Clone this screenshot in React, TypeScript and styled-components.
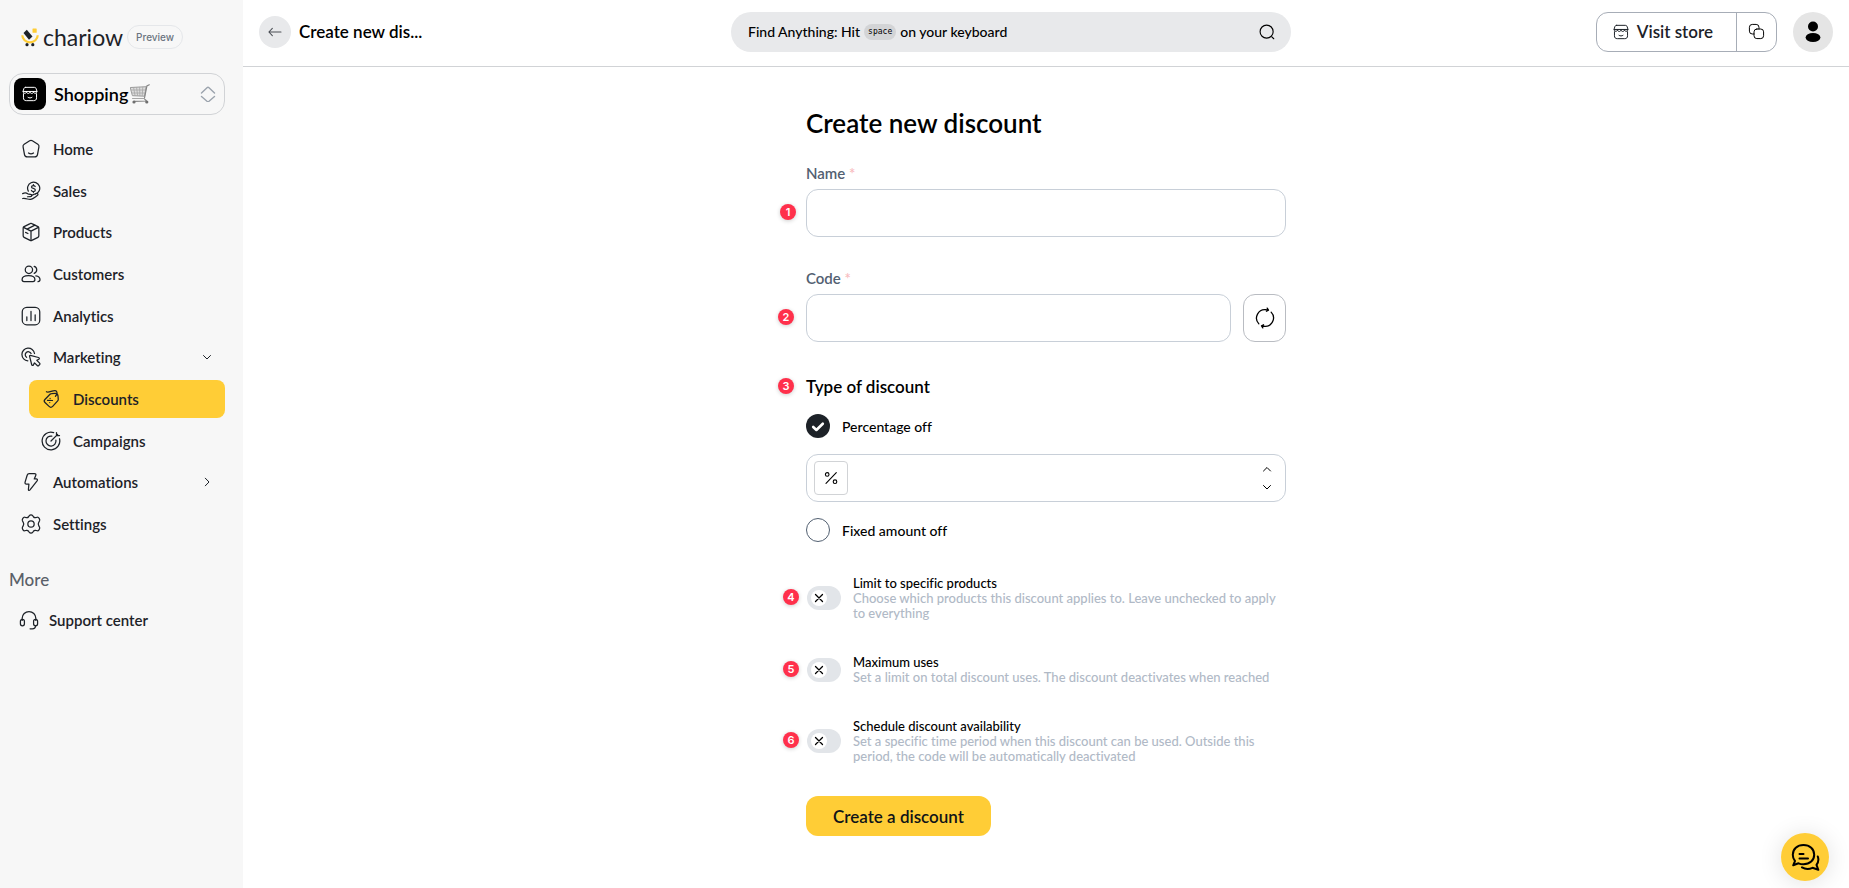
import React from "react";
import styled, { createGlobalStyle } from "styled-components";

const color = {
  ink: "#1d2228",
  black: "#000000",
  yellow: "#ffcd36",
  sidebar: "#f7f7f7",
  line: "#d1d3d6",
  field: "#c8cfd8",
  label: "#526071",
  hint: "#b0b9c6",
  pill: "#e8e9eb",
  red: "#ff304b",
};

const GlobalStyle = createGlobalStyle`
  *, *::before, *::after { box-sizing: border-box; }
  body {
    margin: 0;
    font-family: Lato, "Open Sans", sans-serif;
    font-size: 14px;
    font-variant-ligatures: none;
    color: ${color.black};
    background: #ffffff;
  }
  button, input { font: inherit; font-variant-ligatures: none; color: inherit; }
  button { cursor: pointer; }
  svg { display: block; flex: none; }
`;

/* ---------- icons ---------- */

type IconProps = { size?: number; weight?: number; children?: React.ReactNode; box?: number };

const Icon = ({ size = 20, weight = 1.5, box = 24, children }: IconProps) => (
  <svg
    width={size}
    height={size}
    viewBox={`0 0 ${box} ${box}`}
    fill="none"
    stroke="currentColor"
    strokeWidth={weight}
    strokeLinecap="round"
    strokeLinejoin="round"
    aria-hidden="true"
  >
    {children}
  </svg>
);

const HomeIcon = () => (
  <Icon>
    <path d="M10.4 2.1a3 3 0 0 1 3.2 0l6.600 4.200a3 3 0 0 1 1.300 3.200l-1.700 9.200a3.400 3.400 0 0 1-3.300 2.800h-9a3.400 3.400 0 0 1-3.300-2.800L2.500 9.500a3 3 0 0 1 1.300-3.200z" />
    <path d="M9 16.800c1.800 1.300 4.200 1.300 6 0" />
  </Icon>
);

const SalesIcon = () => (
  <Icon>
    <path d="M8.800 12.200A7.300 7.300 0 1 1 17.500 15.600" />
    <path d="M17 6.600c-.4-.8-1.200-1.200-2.200-1.200-1.300 0-2.200.7-2.200 1.700 0 2.500 4.600 1.200 4.600 3.800 0 1.100-1 1.800-2.300 1.800-1.200 0-2.100-.6-2.400-1.500M14.900 4.200v1.200M14.900 12.700v1.200" />
    <path d="M2 15.200c2.400-1.300 4.300-1.300 6 .1 1 .7 2 .7 3.300.7 2.200 0 2.200 2.700 0 2.800l-3.500.1" />
    <path d="M12.600 17.300l5.600-2.300c2-.8 3 1.400 1.300 2.500-2.700 1.800-5.200 4-7.800 4.500-3 .6-5-1.600-9.700-1" />
  </Icon>
);

const ProductsIcon = () => (
  <Icon>
    <path d="M11 1.900a2 2 0 0 1 2 0l7.300 3.700a2 2 0 0 1 1.100 1.800v9.200a2 2 0 0 1-1.100 1.800L13 22.100a2 2 0 0 1-2 0l-7.300-3.700a2 2 0 0 1-1.100-1.800V7.400a2 2 0 0 1 1.100-1.800z" />
    <path d="M3 6.500l9 4.500 9-4.500M12 11v11M7.300 8.500l9.400-4.700M5.500 12.500l2.800 1.300" />
  </Icon>
);

const CustomersIcon = () => (
  <Icon>
    <circle cx="9.500" cy="7" r="4.400" />
    <path d="M15.800 2.800a4.400 4.400 0 0 1 0 8.400" />
    <path d="M1.300 18.700c0-3 3-4.700 7.700-4.700s7.700 1.700 7.700 4.700c0 1.500-.8 2.500-2.300 2.500H3.600c-1.500 0-2.300-1-2.300-2.500z" />
    <path d="M17.800 14.300c3.100.4 5 2 5 4.400 0 1.500-.9 2.500-2.400 2.500" />
  </Icon>
);

const AnalyticsIcon = () => (
  <Icon>
    <rect x="1.500" y="1.500" width="21" height="21" rx="5.500" />
    <path d="M7 13v4.500M12 6.500v11M17 10.500v7" />
  </Icon>
);

const MarketingIcon = () => (
  <Icon>
    <path d="M8.200 16.600a7.600 7.600 0 1 1 8-8.800" />
    <path d="M6.700 12.400a3.700 3.700 0 1 1 5.400-4.700" />
    <path d="M11.200 10.100l9.800 2.500c1.200.3 1.300 1.500.3 2.100l-2.300 1.300 3.300 3.400c.6.600.6 1.200 0 1.800l-1 1c-.6.600-1.200.6-1.800 0L16.200 19l-1.300 2.400c-.6 1-1.800.8-2.100-.4l-2.500-9.700c-.2-.8.200-1.300.9-1.200z" />
  </Icon>
);

const DiscountIcon = () => (
  <Icon>
    <path d="M4.700 12.600 10.800 6.300c.5-.5 1.100-.8 1.800-.8l4.300-.3c2-.1 3.300 1 3.500 3l.3 4.200c.1.700-.2 1.400-.7 1.900l-6 6.500c-1.400 1.500-2.900 1.500-4.300.1l-4.900-4.700c-1.300-1.300-1.300-2.400-.1-3.600z" />
    <path d="M6.500 3.300c2.500 1.700 7-1.700 10.500-1.300 2.700.3 3 3.500.3 6.800M7.800 13.600l6 .2M10.900 11.300v.1M10.500 16.200v.1" />
  </Icon>
);

const CampaignIcon = () => (
  <Icon>
    <path d="M15.200 1.900A10.600 10.600 0 1 0 22.200 9.300" />
    <path d="M13 6.100a6 6 0 1 0 4.900 4.900M12 12l8-8M18.600 1.800v3.600h3.600" />
  </Icon>
);

const BoltIcon = () => (
  <Icon>
    <path d="M9.800 1.800h6.400c1.500 0 2.100 1 1.500 2.300l-1.800 4.200h2.300c1.500 0 2 1.200 1.100 2.400l-8.500 10.700c-1 1.200-2 .8-1.900-.7l.6-6.200H6.600c-1.400 0-2.100-1-1.700-2.300l2.500-8.300c.4-1.400 1.100-2.100 2.400-2.100z" />
  </Icon>
);

const SettingsIcon = () => (
  <Icon>
    <circle cx="12" cy="12" r="3.800" />
    <path d="M9.800 2.300c1.200-1.500 3.200-1.500 4.400 0l.7 1c.7.900 1.800 1.300 2.900 1l1.700-.4c1.700-.3 3.500 2.700 2.800 4.200l-.9 1.600c-.6 1-.6 3.600 0 4.600l.9 1.600c.7 1.500-1.100 4.500-2.800 4.200l-1.700-.4c-1.100-.3-2.200.1-2.900 1l-.7 1c-1.200 1.500-3.200 1.500-4.400 0l-.7-1c-.7-.9-1.800-1.300-2.900-1l-1.700.4c-1.700.3-3.500-2.700-2.800-4.200l.9-1.600c.6-1 .6-3.600 0-4.600l-.9-1.600c-.7-1.500 1.100-4.500 2.800-4.200l1.700.4c1.100.3 2.200-.1 2.900-1z" />
  </Icon>
);

const SupportIcon = () => (
  <Icon>
    <path d="M3.800 12.500V10a8.200 8.200 0 0 1 16.400 0v2.500" />
    <rect x="1.700" y="11.200" width="4.800" height="7.800" rx="2.400" />
    <rect x="17.500" y="11.200" width="4.800" height="7.800" rx="2.400" />
    <path d="M19.900 19c0 2.200-1.600 3.600-4 3.600h-2.600" />
  </Icon>
);

const StoreIcon = ({ size = 18 }: { size?: number }) => (
  <Icon size={size}>
    <path d="M5.500 2h13c1.600 0 2.400.8 2.800 2.200l1.200 4H1.500l1.200-4C3.100 2.800 3.900 2 5.500 2z" />
    <path d="M1.500 8.200c0 3.700 5.200 3.700 5.300.4 0 3.500 5.200 3.500 5.200 0 0 3.500 5.200 3.500 5.200 0 .1 3.300 5.300 3.300 5.300-.4" />
    <path d="M2.200 11.500v6.200c0 3 1.500 4.300 4.300 4.300h11c2.800 0 4.300-1.300 4.300-4.300v-6.200M9 17c1.800 1.300 4.200 1.300 6 0" />
  </Icon>
);

const CopyIcon = () => (
  <Icon size={17} weight={1.4}>
    <rect x="8.500" y="8.500" width="13.500" height="13.500" rx="4" />
    <path d="M8.500 15.500H6a4 4 0 0 1-4-4V6a4 4 0 0 1 4-4h5.500a4 4 0 0 1 4 4v2.500" />
  </Icon>
);

const SearchIcon = () => (
  <Icon size={18} weight={1.5}>
    <circle cx="11.500" cy="11.500" r="8.700" />
    <path d="M18.500 18.500l2.500 2.500" />
  </Icon>
);

const RefreshIcon = () => (
  <Icon size={22} weight={1.4}>
    <path d="M5.300 18.400A9.200 9.200 0 0 1 13.500 3c.8.100 1.600.2 2.300.4M14.400 1.200l1.400 2.200-2.200 1.200" />
    <path d="M18.700 5.600A9.200 9.200 0 0 1 10.500 21c-.8-.1-1.600-.2-2.300-.4M9.600 22.800l-1.400-2.200 2.200-1.200" />
  </Icon>
);

const ArrowLeftIcon = () => (
  <Icon size={16} weight={1.6}>
    <path d="M21 12H3M8 6.500L2.800 12 8 17.500" />
  </Icon>
);

const Chevron = ({ d, size = 12 }: { d: string; size?: number }) => (
  <Icon size={size} box={12} weight={1}>
    <path d={d} />
  </Icon>
);

const UP = "M2.500 8L6 4.500 9.500 8";
const DOWN = "M2.500 4.500L6 8l3.500-3.500";
const RIGHT = "M4.300 2.200L8 6 4.300 9.800";

const PercentIcon = () => (
  <Icon size={14} box={14} weight={1.1}>
    <path d="M2 12.300L12.300 1.700" />
    <circle cx="3.200" cy="3.400" r="1.800" />
    <circle cx="11" cy="10.700" r="1.800" />
  </Icon>
);

const LogoMark = () => (
  <svg width="18" height="20" viewBox="0 0 18 20" aria-hidden="true">
    <path d="M1.300 8.300a7.700 7 0 0 0 15.400 0" fill="none" stroke={color.yellow} strokeWidth="2.200" />
    <rect x="11.500" y="1.500" width="4.200" height="4.200" rx=".5" fill={color.yellow} />
    <path d="M5.800 2.800l5.700 6.700-3.500 3.200-5.500-6.600z" fill={color.ink} />
    <circle cx="6" cy="17.700" r="1.600" fill={color.ink} />
    <circle cx="11.800" cy="17.700" r="1.600" fill={color.ink} />
  </svg>
);

const CartIcon = () => (
  <svg width="20" height="20" viewBox="0 0 20 20" aria-hidden="true" fill="none" strokeLinecap="round">
    <path d="M.6 3.500l15.600-.8-1.600 9.500-11.800-.5z" fill="#dcdcdc" stroke="#9a9a9a" strokeWidth="1" />
    <path d="M3.600 3.500l1.400 8M6.600 3.500l1 8M9.600 3.300l.3 8.500M12.800 3.200l-.6 8.500M1.200 6h14.300M2 9h13" stroke="#a6a6a6" strokeWidth=".8" />
    <path d="M19.300.8l-2.400 1.100-2.500 12.600c-.2.900 1.800 1.500 2 2.500L4 17.300" stroke="#858585" strokeWidth="1.200" />
    <path d="M2.500 14.500h12" stroke="#a6a6a6" strokeWidth="1" />
    <circle cx="4" cy="18" r="1.600" fill="#6f6f6f" />
    <circle cx="16.800" cy="18" r="1.600" fill="#6f6f6f" />
  </svg>
);

const UserIcon = () => (
  <svg width="16" height="22" viewBox="0 0 16 22" aria-hidden="true">
    <circle cx="8" cy="5.500" r="5" />
    <ellipse cx="8" cy="16.500" rx="7.400" ry="4.600" />
  </svg>
);

const ChatIcon = () => (
  <Icon size={30} box={30} weight={2}>
    <path d="M13.500 3C7.200 3 2.800 7 2.800 12.700c0 2.500.8 4.600 2.200 6.300l-1.800 4.300 5.300-2c1.500.7 3.200 1 5 1 6.300 0 10.700-4 10.700-9.600S19.800 3 13.500 3z" />
    <path d="M9.500 12h4M9.500 16.500h8.500M27.800 14.500c1 3 .6 6-1.300 8.300l1.800 5-5.800-2c-4 1.700-7.500 1.300-10.500-.4" />
  </Icon>
);

/* ---------- sidebar ---------- */

const Page = styled.div`
  display: flex;
  min-height: 100vh;
`;

const Sidebar = styled.aside`
  flex: none;
  width: 243px;
  padding: 24px 18px 24px 9px;
  background: ${color.sidebar};
`;

const Brand = styled.a`
  display: flex;
  align-items: center;
  gap: 4px;
  height: 25px;
  padding-left: 12px;
  color: ${color.ink};
  text-decoration: none;
`;

const Wordmark = styled.span`
  font-size: 23px;
  line-height: 24px;
`;

const Preview = styled.span`
  display: flex;
  align-items: center;
  height: 24px;
  padding: 0 8px;
  border: 1px solid #e5e7ea;
  border-radius: 12px;
  font-family: Inter, sans-serif;
  font-size: 10px;
  font-weight: 500;
  color: #6b7480;
`;

const StoreSwitch = styled.button`
  display: flex;
  align-items: center;
  width: 100%;
  height: 42px;
  margin-top: 24px;
  padding: 0 8px 0 4px;
  border: 1px solid ${color.line};
  border-radius: 14px;
  background: transparent;
`;

const StoreBadge = styled.span`
  display: grid;
  place-items: center;
  width: 32px;
  height: 32px;
  border-radius: 8px;
  background: ${color.black};
  color: #ffffff;
`;

const StoreName = styled.span`
  display: flex;
  flex: 1;
  align-items: center;
  gap: 2px;
  padding-left: 8px;
  font-size: 18px;
  font-weight: 600;
`;

const Sorter = styled.span`
  display: flex;
  flex-direction: column;
  color: #9ba3ad;
`;

const NavList = styled.ul`
  display: flex;
  flex-direction: column;
  justify-content: space-between;
  height: 413px;
  margin: 15px 0 0;
  padding: 0;
  list-style: none;
`;

const NavLink = styled.a<{ $nested?: boolean; $active?: boolean }>`
  display: flex;
  align-items: center;
  gap: 12px;
  height: 38px;
  margin-left: ${(p) => (p.$nested ? 20 : 0)}px;
  padding: 0 12px;
  border-radius: 8px;
  background: ${(p) => (p.$active ? color.yellow : "transparent")};
  color: ${color.ink};
  font-size: 15px;
  font-weight: 600;
  text-decoration: none;
`;

const NavText = styled.span`
  flex: 1;
`;

const MoreTitle = styled.h2`
  margin: 26px 0 0;
  font-size: 17px;
  font-weight: 500;
  line-height: 22px;
  color: #5a6069;
`;

const SupportLink = styled(NavLink)`
  gap: 10px;
  margin-top: 10px;
  padding: 0 10px;
`;

type NavEntry = {
  text: string;
  icon: React.ReactNode;
  nested?: boolean;
  active?: boolean;
  arrow?: string;
};

const nav: NavEntry[] = [
  { text: "Home", icon: <HomeIcon /> },
  { text: "Sales", icon: <SalesIcon /> },
  { text: "Products", icon: <ProductsIcon /> },
  { text: "Customers", icon: <CustomersIcon /> },
  { text: "Analytics", icon: <AnalyticsIcon /> },
  { text: "Marketing", icon: <MarketingIcon />, arrow: DOWN },
  { text: "Discounts", icon: <DiscountIcon />, nested: true, active: true },
  { text: "Campaigns", icon: <CampaignIcon />, nested: true },
  { text: "Automations", icon: <BoltIcon />, arrow: RIGHT },
  { text: "Settings", icon: <SettingsIcon /> },
];

/* ---------- top bar ---------- */

const Body = styled.div`
  flex: 1;
  min-width: 0;
`;

const TopBar = styled.header`
  display: flex;
  justify-content: space-between;
  align-items: center;
  gap: 16px;
  height: 67px;
  padding: 0 16px 3px;
  border-bottom: 1px solid ${color.line};
`;

const TopLeft = styled.div`
  display: flex;
  align-items: center;
  gap: 8px;
  padding-right: 4px;
  font-size: 17px;
  font-weight: 600;
`;

const BackButton = styled.button`
  display: grid;
  place-items: center;
  width: 32px;
  height: 32px;
  padding: 0;
  border: 0;
  border-radius: 50%;
  background: ${color.pill};
  color: #4a4e54;
`;

const SearchButton = styled.button`
  display: flex;
  align-items: center;
  gap: 4px;
  flex: 0 1 560px;
  height: 40px;
  padding: 0 15px 0 17px;
  border: 0;
  border-radius: 20px;
  background: ${color.pill};
  font-size: 14px;
  font-weight: 500;
  svg { margin-left: auto; }
`;

const Key = styled.kbd`
  padding: 0 4px;
  border-radius: 8px;
  background: #d3d4d6;
  font-family: "DejaVu Sans Mono", monospace;
  font-size: 8px;
  line-height: 16px;
`;

const TopRight = styled.div`
  display: flex;
  gap: 16px;
`;

const Split = styled.div`
  display: flex;
  height: 40px;
  border: 1px solid #a7adb7;
  border-radius: 12px;
  overflow: hidden;
`;

const VisitLink = styled.a`
  display: flex;
  align-items: center;
  gap: 8px;
  padding: 0 23px 0 16px;
  color: ${color.ink};
  font-size: 17px;
  font-weight: 600;
  text-decoration: none;
`;

const CopyButton = styled.button`
  display: grid;
  place-items: center;
  width: 40px;
  padding: 0;
  border: 0;
  border-left: 1px solid #a7adb7;
  background: transparent;
`;

const Avatar = styled.button`
  display: grid;
  place-items: center;
  width: 40px;
  height: 40px;
  padding: 0;
  border: 0;
  border-radius: 50%;
  background: #e5e5e5;
`;

/* ---------- form ---------- */

const Form = styled.form`
  width: 480px;
  max-width: 100%;
  margin: 0 auto;
  padding: 39px 0 52px;
`;

const Title = styled.h1`
  margin: 0;
  font-size: 26px;
  font-weight: 600;
  line-height: 34px;
`;

const Field = styled.div<{ $gap: number }>`
  margin-top: ${(p) => p.$gap}px;
`;

const Label = styled.label`
  display: block;
  font-size: 15px;
  font-weight: 600;
  line-height: 16px;
  color: ${color.label};
`;

const Star = styled.span`
  color: #f8bcc0;
`;

const Row = styled.div`
  position: relative;
  display: flex;
  gap: 12px;
  margin-top: 8px;
`;

const Marker = styled.span<{ $left: number }>`
  position: absolute;
  top: calc(50% - 9px);
  left: ${(p) => p.$left}px;
  width: 16px;
  height: 16px;
  border-radius: 50%;
  background: ${color.red};
  box-shadow: 0 1px 4px rgba(0, 0, 0, 0.2);
  color: #ffffff;
  font-family: Inter, sans-serif;
  font-size: 11px;
  font-weight: 600;
  line-height: 16px;
  text-align: center;
`;

const TextInput = styled.input`
  flex: 1;
  min-width: 0;
  height: 48px;
  padding: 0 12px;
  border: 1px solid ${color.field};
  border-radius: 12px;
  background: #ffffff;
  outline: 0;
`;

const IconButton = styled.button`
  display: grid;
  place-items: center;
  width: 43px;
  padding: 0;
  border: 1px solid #b9bcc2;
  border-radius: 12px;
  background: #ffffff;
`;

const Group = styled.fieldset`
  margin: 34px 0 0;
  padding: 0;
  border: 0;
`;

const Legend = styled.legend`
  position: relative;
  width: 100%;
  padding: 0;
  font-size: 17px;
  font-weight: 600;
  line-height: 22px;
`;

const RadioLabel = styled.label`
  display: flex;
  align-items: center;
  gap: 12px;
  margin-top: 16px;
  font-size: 14px;
  font-weight: 500;
`;

const check =
  "url(\"data:image/svg+xml,%3Csvg xmlns='http://www.w3.org/2000/svg' viewBox='0 0 24 24' fill='none' stroke='white' stroke-width='2.6' stroke-linecap='round' stroke-linejoin='round'%3E%3Cpath d='M7.200 13l3.200 3 6.400-6.300'/%3E%3C/svg%3E\")";

const Radio = styled.input`
  appearance: none;
  width: 24px;
  height: 24px;
  margin: 0;
  border: 1px solid ${color.label};
  border-radius: 50%;
  &:checked {
    border: 0;
    background: ${color.ink} ${check} center / 24px 24px no-repeat;
  }
`;

const Amount = styled.div`
  display: flex;
  align-items: center;
  height: 48px;
  margin-top: 16px;
  padding: 0 12px 0 7px;
  border: 1px solid ${color.field};
  border-radius: 12px;
`;

const Unit = styled.span`
  display: grid;
  place-items: center;
  width: 34px;
  height: 34px;
  border: 1px solid ${color.line};
  border-radius: 4px;
`;

const AmountInput = styled.input`
  flex: 1;
  min-width: 0;
  height: 44px;
  padding: 0 12px;
  border: 0;
  background: transparent;
  outline: 0;
  appearance: textfield;
  &::-webkit-inner-spin-button { appearance: none; }
`;

const Stepper = styled.div`
  display: flex;
  flex-direction: column;
`;

const StepButton = styled.button`
  display: grid;
  place-items: center;
  height: 18px;
  padding: 0;
  border: 0;
  background: transparent;
`;

const Options = styled.div`
  display: grid;
  gap: 33px;
  margin-top: 33px;
`;

const Option = styled.div`
  position: relative;
  display: flex;
  align-items: center;
  gap: 12px;
  padding-left: 1px;
`;

const SwitchWrap = styled.span`
  position: relative;
  flex: none;
  width: 34px;
  height: 24px;
`;

const Switch = styled.input`
  appearance: none;
  width: 34px;
  height: 24px;
  margin: 0;
  border-radius: 12px;
  background: #e2e5e9;
`;

const Thumb = styled.span`
  position: absolute;
  top: 4px;
  left: 4px;
  display: grid;
  place-items: center;
  width: 16px;
  height: 16px;
  border-radius: 50%;
  background: #ffffff;
  pointer-events: none;
`;

const OptionText = styled.div`
  flex: 1;
  font-size: 13px;
  line-height: 15px;
`;

const OptionTitle = styled.label`
  display: block;
  line-height: 16px;
  font-weight: 500;
`;

const Hint = styled.p`
  margin: 0;
  color: ${color.hint};
  font-weight: 500;
`;

const Submit = styled.button`
  height: 40px;
  margin-top: 32px;
  padding: 0 27px;
  border: 0;
  border-radius: 12px;
  background: ${color.yellow};
  color: #101418;
  font-size: 17px;
  font-weight: 600;
`;

const ChatButton = styled.button`
  position: fixed;
  right: 20px;
  bottom: 7px;
  display: grid;
  place-items: center;
  width: 48px;
  height: 48px;
  padding: 0;
  border: 0;
  border-radius: 50%;
  background: ${color.yellow};
  box-shadow: 0 2px 24px rgba(0, 0, 0, 0.12);
`;

const options = [
  {
    id: "limit",
    title: "Limit to specific products",
    hint: "Choose which products this discount applies to. Leave unchecked to apply to everything",
  },
  {
    id: "max",
    title: "Maximum uses",
    hint: "Set a limit on total discount uses. The discount deactivates when reached",
  },
  {
    id: "schedule",
    title: "Schedule discount availability",
    hint: "Set a specific time period when this discount can be used. Outside this period, the code will be automatically deactivated",
  },
];

export default function App() {
  return (
    <>
      <GlobalStyle />
      <Page>
        <Sidebar>
          <Brand href="#">
            <LogoMark />
            <Wordmark>chariow</Wordmark>
            <Preview>Preview</Preview>
          </Brand>
          <StoreSwitch type="button">
            <StoreBadge>
              <StoreIcon size={16} />
            </StoreBadge>
            <StoreName>
              Shopping
              <CartIcon />
            </StoreName>
            <Sorter>
              <Icon size={16} weight={1.4} box={16}>
                <path d="M1.500 7L7 1.700q1-.9 2 0L14.500 7M1.500 10.500L7 15.300q1 .8 2 0l5.500-4.800" />
              </Icon>
            </Sorter>
          </StoreSwitch>
          <nav>
            <NavList>
              {nav.map((entry) => (
                <li key={entry.text}>
                  <NavLink href="#" $nested={entry.nested} $active={entry.active}>
                    {entry.icon}
                    <NavText>{entry.text}</NavText>
                    {entry.arrow && <Chevron d={entry.arrow} />}
                  </NavLink>
                </li>
              ))}
            </NavList>
          </nav>
          <MoreTitle>More</MoreTitle>
          <SupportLink href="#">
            <SupportIcon />
            <NavText>Support center</NavText>
          </SupportLink>
        </Sidebar>

        <Body>
          <TopBar>
            <TopLeft>
              <BackButton type="button" aria-label="Back">
                <ArrowLeftIcon />
              </BackButton>
              Create new dis...
            </TopLeft>
            <SearchButton type="button">
              <span>Find Anything: Hit</span>
              <Key>space</Key>
              <span>on your keyboard</span>
              <SearchIcon />
            </SearchButton>
            <TopRight>
              <Split>
                <VisitLink href="#">
                  <StoreIcon size={16} />
                  Visit store
                </VisitLink>
                <CopyButton type="button" aria-label="Copy link">
                  <CopyIcon />
                </CopyButton>
              </Split>
              <Avatar type="button" aria-label="Account">
                <UserIcon />
              </Avatar>
            </TopRight>
          </TopBar>

          <main>
            <Form onSubmit={(e) => e.preventDefault()}>
              <Title>Create new discount</Title>

              <Field $gap={25}>
                <Label htmlFor="name">
                  Name <Star>*</Star>
                </Label>
                <Row>
                  <Marker $left={-26}>1</Marker>
                  <TextInput id="name" />
                </Row>
              </Field>

              <Field $gap={33}>
                <Label htmlFor="code">
                  Code <Star>*</Star>
                </Label>
                <Row>
                  <Marker $left={-28}>2</Marker>
                  <TextInput id="code" />
                  <IconButton type="button" aria-label="Generate a code">
                    <RefreshIcon />
                  </IconButton>
                </Row>
              </Field>

              <Group>
                <Legend>
                  <Marker $left={-28}>3</Marker>
                  Type of discount
                </Legend>
                <RadioLabel>
                  <Radio type="radio" name="kind" defaultChecked />
                  Percentage off
                </RadioLabel>
                <Amount>
                  <Unit>
                    <PercentIcon />
                  </Unit>
                  <AmountInput type="number" aria-label="Percentage off" />
                  <Stepper>
                    <StepButton type="button" aria-label="Increase">
                      <Chevron d={UP} />
                    </StepButton>
                    <StepButton type="button" aria-label="Decrease">
                      <Chevron d={DOWN} />
                    </StepButton>
                  </Stepper>
                </Amount>
                <RadioLabel>
                  <Radio type="radio" name="kind" />
                  Fixed amount off
                </RadioLabel>
              </Group>

              <Options>
                {options.map((option, i) => (
                  <Option key={option.id}>
                    <Marker $left={-23}>{i + 4}</Marker>
                    <SwitchWrap>
                      <Switch type="checkbox" role="switch" id={option.id} />
                      <Thumb>
                        <Icon size={12} box={12} weight={1.3}>
                          <path d="M2.500 2.500l7 7M9.500 2.500l-7 7" />
                        </Icon>
                      </Thumb>
                    </SwitchWrap>
                    <OptionText>
                      <OptionTitle htmlFor={option.id}>{option.title}</OptionTitle>
                      <Hint>{option.hint}</Hint>
                    </OptionText>
                  </Option>
                ))}
              </Options>

              <Submit type="submit">Create a discount</Submit>
            </Form>
          </main>
        </Body>
      </Page>
      <ChatButton type="button" aria-label="Open chat">
        <ChatIcon />
      </ChatButton>
    </>
  );
}
